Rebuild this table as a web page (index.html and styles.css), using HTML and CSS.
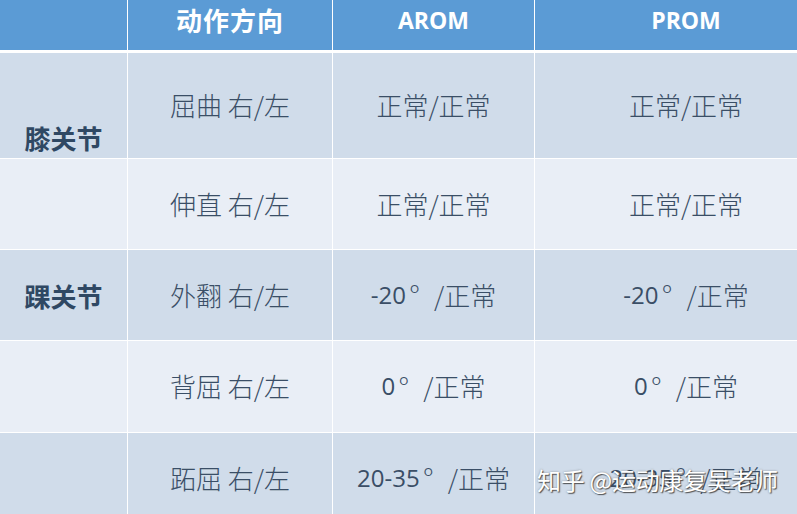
FILE: index.html
```html
<!DOCTYPE html>
<html lang="zh">
<head>
<meta charset="utf-8">
<link rel="stylesheet" href="styles.css">
</head>
<body>
<div class="sheet">
  <div class="grid">
    <div class="cell head"></div>
    <div class="cell head cjk">动作方向</div>
    <div class="cell head latin">AROM</div>
    <div class="cell head latin">PROM</div>

    <div class="cell dark joint joint-low">膝关节</div>
    <div class="cell dark body">屈曲 右/左</div>
    <div class="cell dark body">正常/正常</div>
    <div class="cell dark body">正常/正常</div>

    <div class="cell light joint"></div>
    <div class="cell light body">伸直 右/左</div>
    <div class="cell light body">正常/正常</div>
    <div class="cell light body">正常/正常</div>

    <div class="cell dark joint">踝关节</div>
    <div class="cell dark body">外翻 右/左</div>
    <div class="cell dark body"><span class="num">-20</span><span class="deg">°</span>/正常</div>
    <div class="cell dark body"><span class="num">-20</span><span class="deg">°</span>/正常</div>

    <div class="cell light joint"></div>
    <div class="cell light body">背屈 右/左</div>
    <div class="cell light body"><span class="num">0</span><span class="deg">°</span>/正常</div>
    <div class="cell light body"><span class="num">0</span><span class="deg">°</span>/正常</div>

    <div class="cell dark joint"></div>
    <div class="cell dark body">跖屈 右/左</div>
    <div class="cell dark body"><span class="num">20-35</span><span class="deg">°</span>/正常</div>
    <div class="cell dark body"><span class="num">20-35</span><span class="deg">°</span>/正常</div>
  </div>
  <div class="watermark">知乎 @运动康复吴老师</div>
</div>
</body>
</html>
```

FILE: styles.css
```css
html, body {
  margin: 0;
  padding: 0;
  background: #ffffff;
  overflow: hidden;
}

.sheet {
  position: relative;
  width: 797px;
  height: 514px;
  overflow: hidden;
}

.grid {
  display: grid;
  width: 837px;
  grid-template-columns: 127px 204px 201px 302px;
  grid-template-rows: 52px 105px 90px 90px 91px 90px;
  column-gap: 1px;
  row-gap: 1px;
  background: #ffffff;
  font-family: "Noto Sans CJK SC", "Noto Sans", sans-serif;
  color: #3a4e66;
}

.cell {
  display: flex;
  align-items: center;
  justify-content: center;
  white-space: nowrap;
  box-sizing: border-box;
}

.head {
  background: #5b9bd5;
  background-clip: content-box;
  color: #ffffff;
  border-bottom: 2px solid #ffffff;
  align-items: flex-start;
}

.head.cjk {
  font-weight: 700;
  font-size: 26px;
  letter-spacing: 1px;
  line-height: 40px;
}

.head.latin {
  font-family: "Open Sans", "Liberation Sans", sans-serif;
  font-weight: 700;
  font-size: 23px;
  line-height: 40px;
}

.dark {
  background: #d0dcea;
}

.light {
  background: #e9eef6;
}

.body {
  font-size: 26px;
  font-weight: 300;
  padding-bottom: 2px;
}

.joint {
  font-weight: 700;
  font-size: 26px;
  color: #2f4863;
}

.joint-low {
  align-items: flex-end;
  padding-bottom: 2px;
}

.num {
  font-family: "Open Sans", "Liberation Sans", sans-serif;
  font-weight: 400;
  font-size: 24px;
}

.deg {
  display: inline-block;
  width: 28px;
  text-align: left;
  padding-left: 3px;
  box-sizing: border-box;
  font-family: "Open Sans", sans-serif;
}

.watermark {
  position: absolute;
  left: 537px;
  top: 462px;
  font-family: "Noto Sans CJK SC", sans-serif;
  font-size: 24px;
  font-weight: 400;
  color: #ffffff;
  white-space: nowrap;
  letter-spacing: -0.3px;
  text-shadow: 1px 1px 1px rgba(60, 60, 60, 0.85), 0 0 2px rgba(60, 60, 60, 0.5);
}
```
